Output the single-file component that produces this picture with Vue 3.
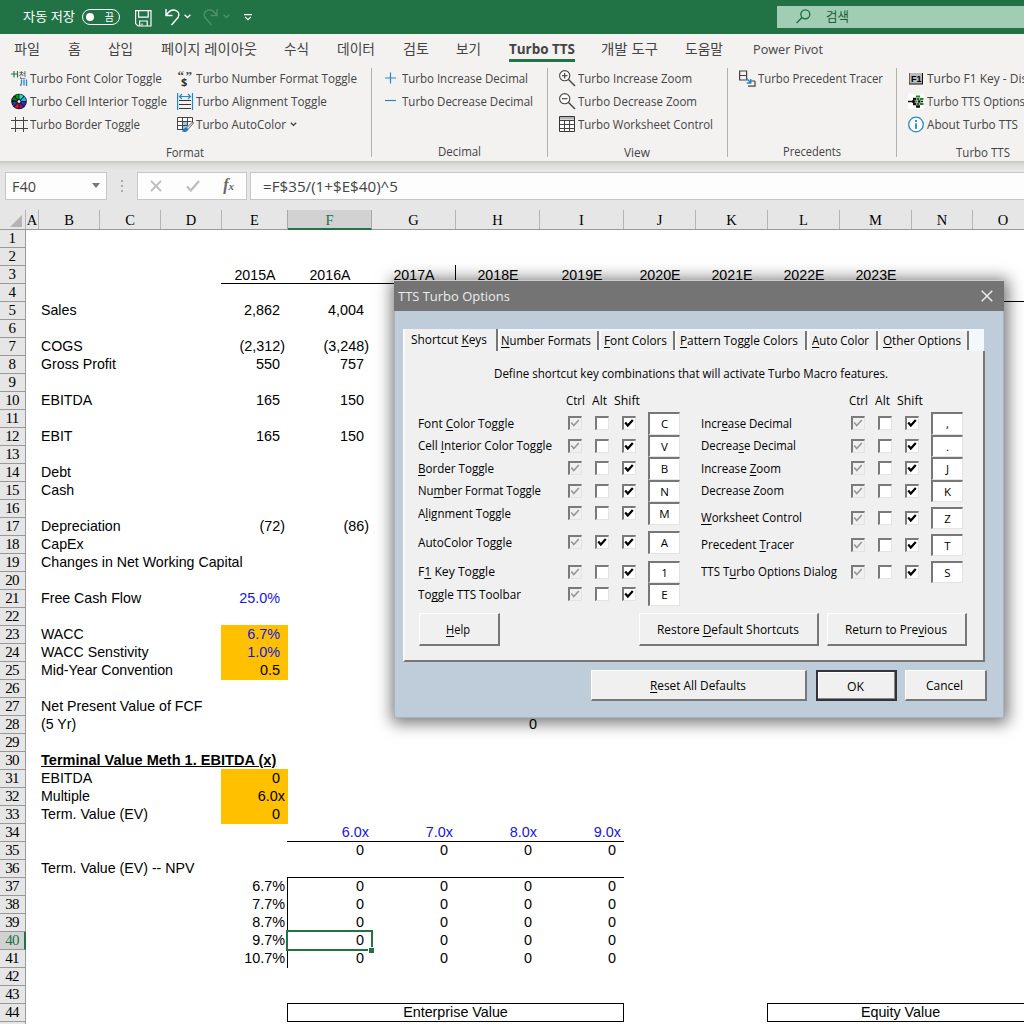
<script setup>
// Condenses or widens a label so that it takes exactly the given width.
const vFit = {
  mounted(el, { value }) {
    if (!value) return
    const natural = el.getBoundingClientRect().width
    el.style.transform = `scaleX(${value / natural})`
    el.style.marginRight = `${value - natural}px`
  },
}

const menu = [
  ['파일', 26, 54], ['홈', 13, 40], ['삽입', 25, 53], ['페이지 레이아웃', 96, 123], ['수식', 25, 53],
  ['데이터', 38, 66], ['검토', 26, 53], ['보기', 25, 53], ['Turbo TTS', 66, 92], ['개발 도구', 57, 84],
  ['도움말', 38, 68], ['Power Pivot', 70, 80],
]

const groups = [
  { name: 'Format', labelW: 38, w: 372, cols: [
    { w: 166, items: [['font', 'Turbo Font Color Toggle', 132], ['wheel', 'Turbo Cell Interior Toggle', 137], ['border', 'Turbo Border Toggle', 110]] },
    { w: 190, items: [['number', 'Turbo Number Format Toggle', 161], ['align', 'Turbo Alignment Toggle', 131], ['auto', 'Turbo AutoColor', 90, true]] },
  ] },
  { name: 'Decimal', labelW: 43, w: 176, cols: [
    { w: 160, items: [['plus', 'Turbo Increase Decimal', 126], ['minus', 'Turbo Decrease Decimal', 131]] },
  ] },
  { name: 'View', labelW: 26, w: 180, cols: [
    { w: 160, items: [['zoomin', 'Turbo Increase Zoom', 114], ['zoomout', 'Turbo Decrease Zoom', 119], ['sheet', 'Turbo Worksheet Control', 135]] },
  ] },
  { name: 'Precedents', labelW: 58, w: 169, cols: [
    { w: 150, items: [['trace', 'Turbo Precedent Tracer', 125]] },
  ] },
  { name: 'Turbo TTS', labelW: 54, w: 174, cols: [
    { w: 160, items: [['f1', 'Turbo F1 Key - Disable', 124], ['options', 'Turbo TTS Options', 98], ['info', 'About Turbo TTS', 91]] },
  ] },
]

const columns = [
  ['A', 13], ['B', 61], ['C', 61], ['D', 61], ['E', 66], ['F', 84], ['G', 84], ['H', 84], ['I', 84],
  ['J', 72], ['K', 72], ['L', 72], ['M', 72], ['N', 61], ['O', 61],
]
const columnTemplate = columns.map((c) => c[1] + 'px').join(' ')
const colIndex = (name) => columns.findIndex((c) => c[0] === name) + 1

const area = (from, to = from) => {
  const a = [colIndex(from[0]), +from.slice(1)]
  const b = [colIndex(to[0]), +to.slice(1)]
  return { gridArea: `${a[1]} / ${a[0]} / ${b[1] + 1} / ${b[0] + 1}` }
}

const cells = [
  ...[['E', '2015A'], ['F', '2016A'], ['G', '2017A'], ['H', '2018E'], ['I', '2019E'], ['J', '2020E'], ['K', '2021E'], ['L', '2022E'], ['M', '2023E']]
    .map(([c, t]) => [c + 3, t, 'mid']),
  ['B5', 'Sales'], ['E5', '2,862', 'num'], ['F5', '4,004', 'num'],
  ['B7', 'COGS'], ['E7', '(2,312)', 'end'], ['F7', '(3,248)', 'end'],
  ['B8', 'Gross Profit'], ['E8', '550', 'num'], ['F8', '757', 'num'],
  ['B10', 'EBITDA'], ['E10', '165', 'num'], ['F10', '150', 'num'],
  ['B12', 'EBIT'], ['E12', '165', 'num'], ['F12', '150', 'num'],
  ['B14', 'Debt'], ['B15', 'Cash'],
  ['B17', 'Depreciation'], ['E17', '(72)', 'end'], ['F17', '(86)', 'end'],
  ['B18', 'CapEx'], ['B19', 'Changes in Net Working Capital'],
  ['B21', 'Free Cash Flow'], ['E21', '25.0%', 'num blue'],
  ['B23', 'WACC'], ['E23', '6.7%', 'num blue'],
  ['B24', 'WACC Senstivity'], ['E24', '1.0%', 'num blue'],
  ['B25', 'Mid-Year Convention'], ['E25', '0.5', 'num'],
  ['B27', 'Net Present Value of FCF'], ['B28', '(5 Yr)'], ['H28', '0', 'end'],
  ['B30', 'Terminal Value Meth 1. EBITDA (x)', 'heading'],
  ['B31', 'EBITDA'], ['E31', '0', 'num'], ['B32', 'Multiple'], ['E32', '6.0x', 'end'],
  ['B33', 'Term. Value (EV)'], ['E33', '0', 'num'],
  ['F34', '6.0x', 'end blue'], ['G34', '7.0x', 'end blue'], ['H34', '8.0x', 'end blue'], ['I34', '9.0x', 'end blue'],
  ['B36', 'Term. Value (EV) -- NPV'],
  ...['6.7%', '7.7%', '8.7%', '9.7%', '10.7%'].map((t, i) => ['E' + (37 + i), t, 'end']),
  ...[35, 37, 38, 39, 40, 41].flatMap((r) => ['F', 'G', 'H', 'I'].map((c) => [c + r, '0', 'num'])),
]

const marks = [
  ['E23', 'E25', 'amber'], ['E31', 'E33', 'amber'],
  ['E3', 'G3', 'line-b'], ['G3', 'G3', 'line-r'], ['H4', 'O4', 'line-b'],
  ['F34', 'I34', 'line-b'], ['F37', 'I41', 'line-tl'],
]

const leftKeys = [
  ['Font &Color Toggle', 96, 'C', 0], ['Cell &Interior Color Toggle', 134, 'V', 0], ['&Border Toggle', 76, 'B', 0],
  ['Nu&mber Format Toggle', 123, 'N', 0], ['A&lignment Toggle', 93, 'M', 0], ['AutoColor Toggle', 94, 'A', 6.5, true],
  ['F&1 Key Toggle', 77, '1', 7], ['To&ggle TTS Toolbar', 103, 'E', 0],
]
const rightKeys = [
  ['Incr&ease Decimal', 91, ',', 0], ['Decrea&se Decimal', 95, '.', 0], ['Increase &Zoom', 80, 'J', 0],
  ['Decrease Zoom', 83, 'K', 0], ['&Worksheet Control', 101, 'Z', 4.5], ['Precedent &Tracer', 93, 'T', 4.5],
  ['TTS T&urbo Options Dialog', 136, 'S', 4.5],
]
const dialogTabs = [
  ['&Number Formats', 90, 101], ['&Font Colors', 63, 76], ['&Pattern Toggle Colors', 118, 132],
  ['&Auto Color', 57, 71], ['&Other Options', 78, 91],
]
const split = (text) => {
  const i = text.indexOf('&')
  return i < 0 ? [text, '', ''] : [text.slice(0, i), text[i + 1], text.slice(i + 2)]
}
</script>

<template>
  <div class="app">
    <header class="titlebar">
      <span class="autosave"><span v-fit="52" class="fit">자동 저장</span></span>
      <span class="switch"><i></i><b>끔</b></span>
      <svg class="i-save" width="17" height="17" viewBox="0 0 17 17" fill="none" stroke="#fff" stroke-width="1.2"><path d="M.6.6h15.400v15.400H3L.6 13.600zM3.600.6v6.600h9.600V.6M4.600 16v-5h7.600v5" /><path d="M7 13.500v2" /></svg>
      <svg class="i-undo" width="16" height="18" viewBox="0 0 16 18" fill="none" stroke="#fff" stroke-width="1.400"><path d="M1 1v6.500h6.500M1.300 7.200C4 3 7 1.500 10 2.200c3.600.8 5 4.300 3 7.300L6.500 17" /></svg>
      <svg class="i-chev" width="7" height="5" viewBox="0 0 7 5" fill="none" stroke="#fff" stroke-width="1.400"><path d="M.6.8l2.900 2.700L6.400.8" /></svg>
      <svg class="i-redo" width="16" height="18" viewBox="0 0 16 18" fill="none" stroke="#4f9069" stroke-width="1.400"><path d="M14 1v6.500H7.500M13.700 7.200C11 3 8 1.500 5 2.200 1.400 3 0 6.500 2 9.500L8.500 17" /></svg>
      <svg class="i-chev" width="7" height="5" viewBox="0 0 7 5" fill="none" stroke="#4f9069" stroke-width="1.400"><path d="M.6.8l2.900 2.700L6.400.8" /></svg>
      <svg class="i-more" width="8" height="7" viewBox="0 0 8 7" fill="none" stroke="#fff" stroke-width="1.200"><path d="M0 .7h8M1.200 3L4 5.600 6.800 3" /></svg>
      <div class="search">
        <svg width="15" height="15" viewBox="0 0 15 15" fill="none" stroke="#1b6a3e" stroke-width="1.300"><circle cx="9.300" cy="5.300" r="4.500" /><path d="M6 8.500L.6 14" /></svg>
        <span v-fit="23" class="fit">검색</span>
      </div>
    </header>

    <nav class="menu">
      <span v-for="m in menu" :key="m[0]" class="menu-item" :class="{ active: m[0] === 'Turbo TTS' }" :style="{ width: m[2] + 'px' }"><span v-fit="m[1]" class="fit">{{ m[0] }}</span></span>
    </nav>

    <section class="ribbon">
      <div v-for="g in groups" :key="g.name" class="group" :style="{ width: g.w + 'px' }">
        <div class="group-cols">
          <div v-for="(c, ci) in g.cols" :key="ci" class="group-col" :style="{ width: c.w + 'px' }">
            <div v-for="it in c.items" :key="it[1]" class="cmd">
              <svg width="17" height="17" viewBox="0 0 17 17" fill="none">
                <g v-if="it[0] === 'font'">
                  <path d="M0 4h5.500M3 1v6.500M6.500 1v6.500M5.500 4h1" stroke="#217346" stroke-width="1.100" />
                  <path d="M10.500 9.500v3.500l-1 3M13 9.500v6M15.500 9.500v6.500" stroke="#2488cc" stroke-width="1.300" />
                  <text x="7.500" y="7.500" class="glyph-ko">천</text>
                </g>
                <g v-else-if="it[0] === 'wheel'">
                  <circle cx="8" cy="8.500" r="7.800" fill="#111" />
                  <path d="M8 8.500L4 2.500 8 1z" fill="#0a0" /><path d="M8 8.500L8 1l5 2z" fill="#19e0e8" />
                  <path d="M8 8.500l5.500-5L15.300 8z" fill="#20b8f0" /><path d="M8 8.500h7l-2 5z" fill="#2233dd" />
                  <path d="M8 8.500l4.500 5.500L8 16z" fill="#8a1490" /><path d="M8 8.500V16l-5-2z" fill="#e01818" />
                  <path d="M8 8.500L2.500 13.500 1 8z" fill="#2038c8" /><path d="M8 8.500L1 7l2.500-4z" fill="#087a20" />
                  <path d="M8 8.500L8 1M8 8.500L3 3M8 8.500H1M8 8.500L3 14M8 8.500V16M8 8.500l5 5M8 8.500h7M8 8.500L13 3" stroke="#111" stroke-width=".9" />
                  <circle cx="8" cy="8.500" r="2" fill="#e8e8e8" stroke="#111" />
                </g>
                <path v-else-if="it[0] === 'border'" d="M4.500 1v15M12.500 1v15M0 4.500h17M0 12.500h17" stroke="#444" />
                <g v-else-if="it[0] === 'number'">
                  <text x="0.500" y="9.500" class="glyph-quote">“</text><text x="8.500" y="9.500" class="glyph-quote">”</text><text x="4" y="15.500" class="glyph-dollar">$</text>
                </g>
                <g v-else-if="it[0] === 'align'">
                  <path d="M.6 0v17M15.500 0v17M2.500 3.500h11M5 1L2.500 3.500 5 6M11 1l2.500 2.500L11 6" stroke="#2488cc" stroke-width="1.200" />
                  <path d="M2 7.500h12M2 11.500h12M2 15.500h12" stroke="#333" />
                </g>
                <g v-else-if="it[0] === 'auto'">
                  <path d="M.5 1.500h15v12H.5z" fill="#fff" />
                  <path d="M5 5.500h6v8H5z" fill="#9cc6ee" />
                  <path d="M.5 14V1.500h15V7M.5 5.500h14M.5 9.500h10M.5 13.500h7M5.500 1.500v12M10.500 1.500v8" stroke="#444" />
                  <path d="M15.500 6l-6 6 1.500 1.500L16.500 7z" fill="#fff" stroke="#444" stroke-width=".9" />
                  <path d="M9 11.500c-2 0-2 3-4.500 3.500 2.500 1.800 6.500 1 6.500-1.500z" fill="#1c78c8" />
                </g>
                <path v-else-if="it[0] === 'plus'" d="M7.500 2.500v11M2 8h11" stroke="#2488cc" stroke-width="1.200" />
                <path v-else-if="it[0] === 'minus'" d="M2 7.500h11" stroke="#2488cc" stroke-width="1.200" />
                <g v-else-if="it[0] === 'zoomin' || it[0] === 'zoomout'" stroke="#444">
                  <circle cx="5.700" cy="5.700" r="5.100" fill="#fff" stroke-width="1.100" /><path d="M9.500 9.500l6.500 6.500" stroke-width="1.400" />
                  <path d="M3 5.700h5.500" stroke-width="1.200" /><path v-if="it[0] === 'zoomin'" d="M5.700 3v5.500" stroke-width="1.200" />
                </g>
                <g v-else-if="it[0] === 'sheet'">
                  <path d="M.5.5h15v15H.5z" fill="#fff" stroke="#333" /><path d="M1 1h14v2.500H1z" fill="#b5b5b5" />
                  <path d="M.5 4.500H16M.5 8.500H16M.5 12.500H16M5.500 4v12M10.500 4v12" stroke="#444" />
                </g>
                <g v-else-if="it[0] === 'trace'">
                  <path d="M.6 1h7v9h-7zM.6 5.500h7M9 16.200h7V11M12 11h4" stroke="#444" stroke-width="1.200" />
                  <path d="M7.500 8.500l4 4M11.700 9v4H7.700" stroke="#2488cc" stroke-width="1.500" />
                </g>
                <g v-else-if="it[0] === 'f1'">
                  <path d="M1 3h14v11.500H1z" fill="#111" /><path d="M1.500 3h12.500v10.500h-12.500z" fill="#b9b9b9" />
                  <text x="3" y="11.500" class="glyph-f1">F1</text>
                </g>
                <g v-else-if="it[0] === 'options'">
                  <path d="M0 1h16v15H0z" fill="#fff" />
                  <path d="M0 8.500h6M3.500 8.500h4" stroke="#111" stroke-width="1.500" />
                  <path d="M4 8.500h2.500M5 6h3M5 11h3M8 13.500h4M10 8.500h2.500" stroke="#111" stroke-width="2.600" />
                  <path d="M8 3.500h4M11.500 6h4M11.500 11h4M7.500 8.500h2" stroke="#168a1c" stroke-width="2" />
                  <path d="M8.500 6h2.500M8.500 11h2.500M13 8.500h2" stroke="#111" stroke-width="1.500" />
                </g>
                <g v-else>
                  <circle cx="8" cy="8.500" r="7.300" fill="#fff" stroke="#2488cc" stroke-width="1.300" />
                  <path d="M8 7.300v5.500M8 4v1.900" stroke="#2488cc" stroke-width="1.800" />
                </g>
              </svg>
              <span v-fit="it[2]" class="fit cmd-text">{{ it[1] }}</span>
              <svg v-if="it[3]" class="caret" width="7" height="5" viewBox="0 0 7 5" fill="none" stroke="#444" stroke-width="1.300"><path d="M.8.8l2.700 2.500L6.200.8" /></svg>
            </div>
          </div>
        </div>
        <div class="group-name"><span v-fit="g.labelW" class="fit">{{ g.name }}</span></div>
      </div>
    </section>

    <section class="formula-bar">
      <div class="name-box"><span v-fit="24" class="fit">F40</span><i></i></div>
      <div class="dots"><i></i><i></i><i></i></div>
      <div class="fx-box">
        <svg width="12" height="12" viewBox="0 0 12 12" stroke="#bdbdbd" stroke-width="1.800"><path d="M1 1l10 10M11 1L1 11" /></svg>
        <svg width="14" height="12" viewBox="0 0 14 12" fill="none" stroke="#bdbdbd" stroke-width="2.200"><path d="M1 6.500l3.800 4L13 1" /></svg>
        <em>f<small>x</small></em>
      </div>
      <div class="formula"><span v-fit="135" class="fit">=F$35/(1+$E$40)^5</span></div>
    </section>

    <main class="sheet">
      <div class="col-heads">
        <div class="corner"><svg width="12" height="12"><path d="M12 0v12H0z" fill="#b4b4b4" /></svg></div>
        <div v-for="c in columns" :key="c[0]" class="col-head" :class="{ on: c[0] === 'F' }" :style="{ width: c[1] + 'px' }">{{ c[0] }}</div>
      </div>
      <div class="sheet-body">
        <div class="row-heads">
          <div v-for="r in 44" :key="r" class="row-head" :class="{ on: r === 40 }">{{ r }}</div>
          <div class="row-head"></div>
        </div>
        <div class="cells" :style="{ gridTemplateColumns: columnTemplate }">
          <div v-for="(m, i) in marks" :key="'m' + i" class="mark" :class="m[2]" :style="area(m[0], m[1])"></div>
          <div v-for="c in cells" :key="c[0]" class="cell" :class="c[2]" :style="area(c[0])"><span>{{ c[1] }}</span></div>
          <div class="mark boxed" :style="area('F44', 'I44')">Enterprise Value</div>
          <div class="mark boxed" :style="area('L44', 'O44')">Equity Value</div>
          <div class="mark selected" :style="area('F40')"><i></i></div>
        </div>
      </div>
    </main>

    <div class="dialog">
      <div class="dialog-title">
        <span v-fit="112" class="fit">TTS Turbo Options</span>
        <svg width="12" height="12" viewBox="0 0 12 12" stroke="#ececec" stroke-width="1.500"><path d="M.7.7l10.600 10.600M11.300.7L.7 11.300" /></svg>
      </div>
      <div class="dialog-body">
        <div class="tabs">
          <div class="tab current"><span v-fit="76" class="fit">Shortcut <u>K</u>eys</span></div>
          <div v-for="t in dialogTabs" :key="t[0]" class="tab" :style="{ width: t[2] + 'px' }"><span v-fit="t[1]" class="fit">{{ split(t[0])[0] }}<u>{{ split(t[0])[1] }}</u>{{ split(t[0])[2] }}</span></div>
        </div>
        <div class="page">
          <p class="intro"><span v-fit="394" class="fit">Define shortcut key combinations that will activate Turbo Macro features.</span></p>
          <div class="key-cols">
            <div v-for="(list, li) in [leftKeys, rightKeys]" :key="li" class="key-col">
              <div class="key-head"><span v-fit="19" class="fit">Ctrl</span><span v-fit="15" class="fit">Alt</span><span v-fit="26" class="fit">Shift</span></div>
              <div v-for="k in list" :key="k[0]" class="key-row" :style="{ marginTop: k[3] + 'px' }">
                <div class="key-label"><span v-fit="k[1]" class="fit">{{ split(k[0])[0] }}<u>{{ split(k[0])[1] }}</u>{{ split(k[0])[2] }}</span></div>
                <span class="check off"><svg width="10" height="10" viewBox="0 0 10 10"><path d="M1.200 4.500l2.600 3L8.800 2" /></svg></span>
                <span class="check"><svg v-if="k[4]" width="10" height="10" viewBox="0 0 10 10"><path d="M1.200 4.500l2.600 3L8.800 2" /></svg></span>
                <span class="check"><svg width="10" height="10" viewBox="0 0 10 10"><path d="M1.200 4.500l2.600 3L8.800 2" /></svg></span>
                <span class="key-box">{{ k[2] }}</span>
              </div>
            </div>
          </div>
          <div class="page-buttons">
            <div class="btn help"><span v-fit="24" class="fit"><u>H</u>elp</span></div>
            <div class="btn restore"><span v-fit="142" class="fit">Restore <u>D</u>efault Shortcuts</span></div>
            <div class="btn previous"><span v-fit="102" class="fit">Return to Pre<u>v</u>ious</span></div>
          </div>
        </div>
        <div class="dialog-buttons">
          <div class="btn reset"><span v-fit="96" class="fit"><u>R</u>eset All Defaults</span></div>
          <div class="btn ok"><span v-fit="17" class="fit">OK</span></div>
          <div class="btn cancel"><span v-fit="37" class="fit">Cancel</span></div>
        </div>
      </div>
    </div>
  </div>
</template>

<style>
body { margin: 0; overflow: hidden; }
</style>

<style scoped>
.app { position: relative; width: 1024px; height: 1024px; overflow: hidden; background: #fff; display: flex; flex-direction: column; font-family: "Open Sans", "Noto Sans CJK KR", sans-serif; }
.app * { box-sizing: border-box; }
.fit { display: inline-block; white-space: nowrap; transform-origin: 0 50%; flex: none; }
svg { flex: none; display: block; overflow: visible; }
u { text-underline-offset: 2px; text-decoration-skip-ink: none; }

.titlebar { height: 34px; flex: none; background: #217346; display: flex; align-items: center; color: #fff; font-size: 13px; padding-left: 23px; }
.autosave { width: 59px; line-height: 16px; margin-top: -3px; }
.switch { width: 38px; height: 16px; border: 1px solid #fff; border-radius: 8px; display: flex; align-items: center; justify-content: space-between; padding: 0 5px 0 3px; margin-top: -1px; }
.switch i { width: 8px; height: 8px; border-radius: 50%; background: #fff; }
.switch b { font-size: 10px; font-weight: 400; line-height: 12px; }
.i-save { margin-left: 15px; margin-top: 2px; }
.i-undo { margin-left: 13px; }
.i-chev { margin-left: 3px; margin-top: -1px; }
.i-redo { margin-left: 12px; }
.i-redo + .i-chev { margin-left: 4px; }
.i-more { margin-left: 14px; }
.search { margin-left: auto; width: 247px; height: 22px; margin-top: -1px; background: #a0cdb4; color: #1b5e38; display: flex; align-items: center; padding-left: 19px; gap: 15px; }
.search span { margin-top: -2px; }

.menu { height: 33px; flex: none; background: #f3f2f1; display: flex; padding-left: 14px; color: #444; font-size: 13.500px; }
.menu-item { flex: none; line-height: 18px; padding-top: 6px; }
.menu-item.active { font-weight: 700; }
.menu-item.active::after { content: ""; display: block; width: 66px; height: 3px; background: #217346; margin-top: 1px; }

.ribbon { height: 94px; flex: none; background: #f3f2f1; display: flex; width: 1071px; }
.group { flex: none; height: 94px; display: flex; flex-direction: column; position: relative; }
.group:not(:last-child)::after { content: ""; position: absolute; right: 0; top: 1px; width: 1px; height: 89px; background: #b3b1b0; }
.group-cols { display: flex; height: 69px; padding-left: 11px; }
.cmd { height: 23px; display: flex; align-items: center; gap: 2px; color: #444; font-size: 12.500px; }
.cmd-text { line-height: 18px; margin-left: -.3px; }
.caret { margin-left: 2px; }
.group-name { text-align: center; color: #444; font-size: 12px; line-height: 18px; margin-top: 8px; padding-right: 2px; }
.glyph-ko { font: 8.500px "Noto Sans CJK KR", sans-serif; fill: #333; }
.glyph-quote { font: bold 13px "Liberation Serif", serif; fill: #444; }
.glyph-dollar { font: bold 11px "Open Sans", sans-serif; fill: #333; }
.glyph-f1 { font: bold 9px "Liberation Sans", sans-serif; fill: #000; }

.formula-bar { height: 49px; flex: none; display: flex; padding: 11px 0 0 5px; background: linear-gradient(#c6c7c3, #dcdcdb 4px, #e6e6e6 9px); color: #444; font-size: 15px; }
.formula-bar > div { height: 28px; flex: none; }
.name-box, .fx-box, .formula { background: #fdfdfd; border: 1px solid #c6c6c6; display: flex; align-items: center; }
.name-box .fit, .formula .fit { margin-top: -1px; }
.name-box { width: 102px; padding: 0 6px; justify-content: space-between; }
.name-box i { border: 4px solid transparent; border-top: 5px solid #777; border-bottom: 0; margin-top: -2px; }
.dots { width: 30px; display: flex; flex-direction: column; align-items: center; justify-content: center; gap: 3px; }
.dots i { width: 2px; height: 2px; background: #aaa; }
.fx-box { width: 110px; padding: 0 12px 0 12px; justify-content: space-between; }
.fx-box em { font: italic bold 16px "Liberation Serif", serif; color: #666; margin-top: -2px; }
.fx-box small { font-size: 11px; }
.formula { width: 790px; margin-left: 3px; padding-left: 12px; }

.sheet { flex: none; }
.col-heads { display: flex; width: 1040px; height: 20px; background: #e6e6e6; border-bottom: 1px solid #999; }
.corner { width: 26px; flex: none; padding: 5px 0 0 10px; border-right: 1px solid #b5b5b5; }
.col-head { flex: none; height: 19px; border-right: 1px solid #b5b5b5; text-align: center; font: 14.500px/20px "Liberation Serif", serif; color: #000; }
.col-head.on { height: 20px; background: #d2d2d2; color: #217346; border-bottom: 2px solid #217346; border-right-color: #a8a8a8; box-shadow: -1px 0 #a8a8a8; }
.sheet-body { display: flex; }
.row-heads { width: 26px; flex: none; background: #e6e6e6; border-right: 1px solid #999; }
.row-head { height: 18px; border-bottom: 1px solid #999; font: 15px/17px "Liberation Serif", serif; letter-spacing: -.7px; text-align: center; padding-right: 1px; color: #000; }
.row-head.on { background: #d2d2d2; color: #217346; width: 26px; border-right: 2px solid #217346; padding: 0; }
.cells { display: grid; grid-auto-rows: 18px; flex: none; font: 14.670px/17px "Liberation Sans", sans-serif; color: #000; }
.cell { white-space: nowrap; padding-left: 2px; min-width: 0; font-size: 14.200px; }
.cell.mid { text-align: center; padding: 1px 0 0; }
.cell.num, .cell.end { display: flex; justify-content: flex-end; padding: 0 3px 0 0; font-size: 14.400px; }
.cell.num { padding-right: 8px; }
.cell.blue { color: #1414e6; }
.cell.heading { font-weight: 700; text-decoration: underline; font-size: 14.550px; }
.mark { margin: -1px 0 0 -1px; }
.amber { background: #ffc000; }
.line-b { border-bottom: 1px solid #000; }
.line-r { border-right: 1px solid #000; }
.line-tl { border-top: 1px solid #000; border-left: 1px solid #000; }
.boxed { border: 1px solid #000; text-align: center; font-size: 14.300px; }
.selected { position: relative; margin: -2px -1px -1px -2px; border: 2px solid #217346; }
.selected i { position: absolute; right: -3px; bottom: -4px; width: 6px; height: 6px; background: #217346; border: solid #fff; border-width: 1px 0 0 1px; }

.dialog { position: absolute; left: 394px; top: 280px; width: 610px; height: 438px; border: 1px solid #a9b4bf; border-top-color: #ccc; box-shadow: 1px 2px 15px 3px rgba(0, 0, 0, .55); background: #bfcddb; display: flex; flex-direction: column; font: 12px/16px "Open Sans", sans-serif; color: #000; }
.dialog-title { height: 30px; flex: none; margin: 0 -1px; background: #747474; color: #ececec; display: flex; align-items: center; justify-content: space-between; padding: 0 11px 0 4px; font-size: 13px; }
.dialog-body { padding: 18px 16px 0 8px; display: flex; flex-direction: column; }
.tabs { display: flex; height: 22px; width: 581px; background: #f3f8fd; align-items: flex-end; }
.tab { flex: none; height: 19px; background: #f0f0f0; border-right: 2px solid #777; margin-bottom: 1px; padding: 2px 0 0 3px; border-left: 2px solid #fbfbfb; }
.tab.current { width: 95px; height: 22px; margin: 0; padding: 3px 0 0 6px; }
.tab:nth-child(2) { padding-left: 1px; }
.page { width: 582px; height: 311px; background: #f0f0f0; border: 2px solid #777; border-top: 0; border-left: 2px solid #f8fafc; padding: 15px 0 0 13px; display: flex; flex-direction: column; }
.intro { margin: 0 0 0 76px; height: 16px; }
.key-cols { display: flex; gap: 21px; margin-top: 11px; height: 220px; }
.key-col { width: 262px; }
.key-head { display: flex; height: 19px; padding-left: 148px; gap: 7px; }
.key-row { display: flex; align-items: center; height: 22.500px; }
.key-label { width: 150px; flex: none; padding-top: 1px; }
.check { width: 14px; height: 14px; flex: none; margin-right: 13px; background: #fff; border: 2px solid #7a7a7a; border-right: 1px solid #e3e3e3; border-bottom: 1px solid #e3e3e3; }
.check path { fill: none; stroke: #000; stroke-width: 2.200; }
.check.off { background: #f0f0f0; }
.check.off path { stroke: #999; stroke-width: 1.700; }
.key-box { width: 32px; height: 22.500px; flex: none; margin-left: -1px; background: #fff; border: 2px solid #777; border-right: 1px solid #e3e3e3; border-bottom: 1px solid #e3e3e3; text-align: center; line-height: 19px; font-size: 11.500px; }
.page-buttons { display: flex; }
.btn { background: #f0f0f0; border: 1px solid #fff; border-right: 2px solid #777; border-bottom: 2px solid #777; display: flex; align-items: center; justify-content: center; height: 33px; flex: none; padding: 2px 2px 0 0; }
.help { width: 81px; margin-left: 1px; }
.restore { width: 180px; margin-left: 139px; }
.previous { width: 140px; margin-left: 8px; }
.dialog-buttons { display: flex; margin: 8px 0 0 188px; }
.dialog-buttons .btn { height: 31px; }
.reset { width: 216px; }
.ok { width: 81px; margin-left: 9px; border: 2px solid #33333b; box-shadow: inset -1px -1px #888, inset 1px 1px #fff; }
.cancel { width: 82px; margin-left: 8px; }
</style>
